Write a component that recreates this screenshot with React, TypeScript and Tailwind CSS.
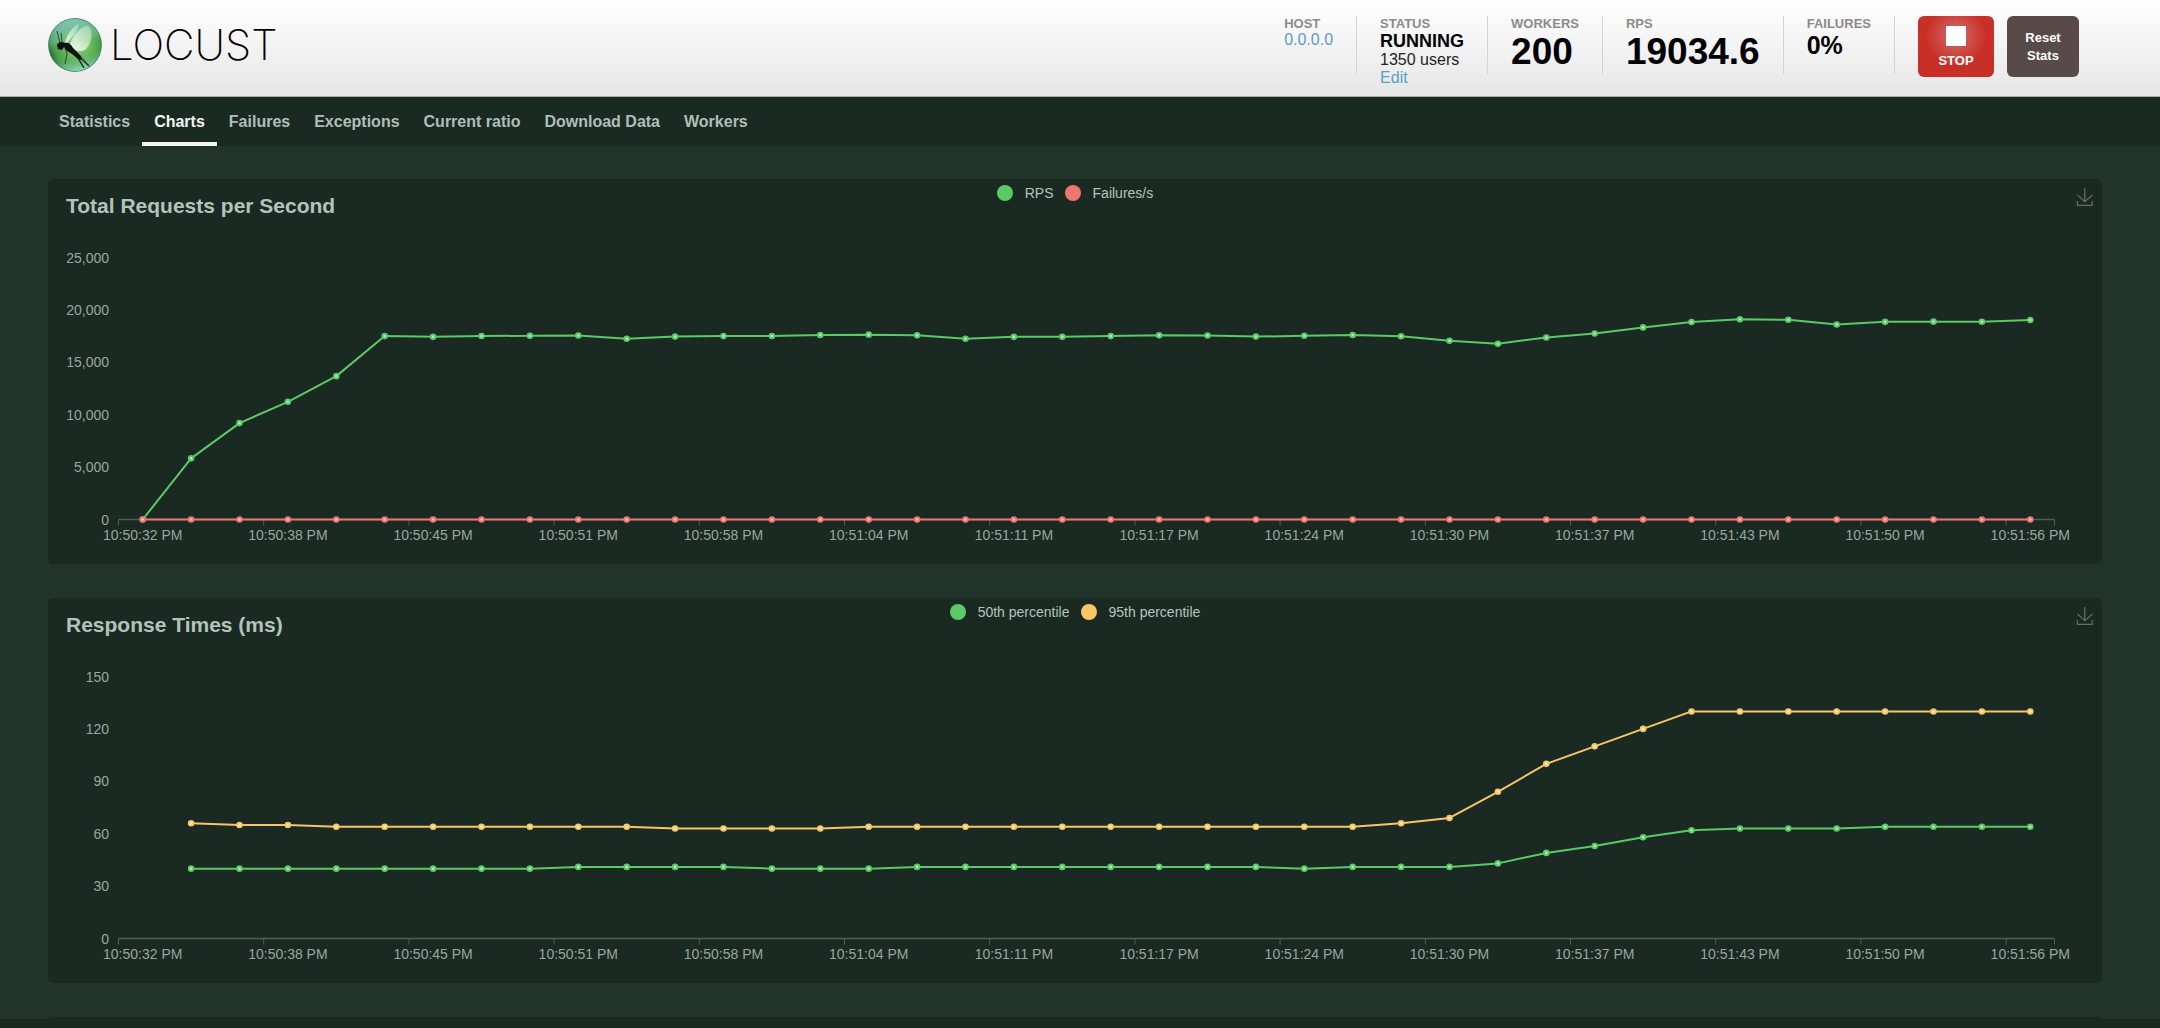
import { useId } from "react";

const navLinks = [
  { text: 'Statistics', url: '#statistics' },
  { text: 'Charts', url: '#charts' },
  { text: 'Failures', url: '#failures' },
  { text: 'Exceptions', url: '#exceptions' },
  { text: 'Current ratio', url: '#ratio' },
  { text: 'Download Data', url: '#download' },
  { text: 'Workers', url: '#workers' },
];

const timeLabels = [
  '10:50:32 PM', '10:50:38 PM', '10:50:45 PM', '10:50:51 PM', '10:50:58 PM', '10:51:04 PM', '10:51:11 PM',
  '10:51:17 PM', '10:51:24 PM', '10:51:30 PM', '10:51:37 PM', '10:51:43 PM', '10:51:50 PM', '10:51:56 PM',
];

const rps = [
  0, 5835, 9200, 11230, 13680, 17500, 17430, 17510, 17530, 17560, 17250, 17450, 17500, 17510, 17610, 17640, 17570,
  17250, 17430, 17440, 17500, 17570, 17560, 17450, 17530, 17600, 17480, 17060, 16770, 17370, 17750, 18330, 18850,
  19110, 19060, 18600, 18860, 18880, 18870, 19034,
];
const failures = rps.map(() => 0);

const p50 = [
  null, 40, 40, 40, 40, 40, 40, 40, 40, 41, 41, 41, 41, 40, 40, 40, 41, 41, 41, 41, 41, 41, 41, 41, 40, 41, 41, 41,
  43, 49, 53, 58, 62, 63, 63, 63, 64, 64, 64, 64,
];
const p95 = [
  null, 66, 65, 65, 64, 64, 64, 64, 64, 64, 64, 63, 63, 63, 63, 64, 64, 64, 64, 64, 64, 64, 64, 64, 64, 64, 66, 69,
  84, 100, 110, 120, 130, 130, 130, 130, 130, 130, 130, 130,
];

const charts = [
  {
    title: 'Total Requests per Second',
    max: 25000,
    series: [
      { name: 'RPS', color: '#5bc965', dot: '#b5f0bb', data: rps },
      { name: 'Failures/s', color: '#ee7571', dot: '#ffd0ce', data: failures },
    ],
  },
  {
    title: 'Response Times (ms)',
    max: 150,
    series: [
      { name: '50th percentile', color: '#5bc965', dot: '#b5f0bb', data: p50 },
      { name: '95th percentile', color: '#f6c667', dot: '#fff0c8', data: p95 },
    ],
  },
];

// plot geometry, in viewBox units
const LEFT = 70.5;
const BASE = 280.5;
const HEIGHT = 262;
const STEP = 48.4;

const Logo = () => {
  const id = useId();
  return (
    <svg viewBox="0 0 54 54" className="size-[54px]" aria-hidden="true">
      <defs>
        <radialGradient id={`${id}ball`} cx="0.55" cy="0.5" r="0.58">
          <stop offset="0" stopColor="#a5dd9c" />
          <stop offset="0.4" stopColor="#6fbf5c" />
          <stop offset="0.75" stopColor="#479b45" />
          <stop offset="1" stopColor="#17592a" />
        </radialGradient>
        <linearGradient id={`${id}sky`} x1="0.3" y1="0" x2="0.5" y2="1">
          <stop offset="0" stopColor="#86cfcf" stopOpacity="0.95" />
          <stop offset="0.4" stopColor="#7cc4a0" stopOpacity="0.5" />
          <stop offset="0.6" stopColor="#4aa045" stopOpacity="0" />
          <stop offset="0.8" stopColor="#6cc088" stopOpacity="0.4" />
          <stop offset="1" stopColor="#a0e0d0" stopOpacity="0.9" />
        </linearGradient>
        <linearGradient id={`${id}wing`} x1="1" y1="0" x2="0.2" y2="1">
          <stop offset="0" stopColor="#fff" stopOpacity="0.3" />
          <stop offset="1" stopColor="#fff" stopOpacity="0.75" />
        </linearGradient>
      </defs>
      <circle cx="27" cy="27" r="26.5" fill={`url(#${id}ball)`} />
      <circle cx="27" cy="27" r="26.5" fill={`url(#${id}sky)`} stroke="#2d6b4c" strokeOpacity="0.6" />
      <path d="M22 27C24 17 34 7 40 8C46 11 44 25 38 31C33 35 26 33 22 27Z" fill={`url(#${id}wing)`} />
      <path d="M17 25C19 16 25 8 31 6C31 11 24 20 18 26Z" fill={`url(#${id}wing)`} />
      <path d="M9 27C10 24 14 23 17 25C20 24 23 26 25 30L33 38L34 42L30 41L24 36L19 33L16 29L14 32L10 31Z" fill="#0c130e" />
      <path d="M32 39L41 48M30 40L36 50" stroke="#142318" strokeWidth="1.4" fill="none" />
      <path d="M12 25L9 13M14 24L13 15M17 30L19 36L17 46" stroke="#142318" strokeOpacity="0.75" strokeWidth="1" fill="none" />
    </svg>
  );
};

const Stat = ({ label, children }: any) => (
  <div className="h-[58px] border-r border-[#d4d4d4] px-[23px]">
    <div className="text-[13px] leading-[15px] font-bold text-[#8b8b8b]">{label}</div>
    {children}
  </div>
);

const Chart = ({ title, max, series }: any) => {
  const x = (i: number) => LEFT + STEP * (i + 0.5);
  const y = (value: number) => BASE - (value / max) * HEIGHT;

  return (
    <section className="rounded-[5px] bg-[#1a2a22]">
      <div className="grid h-[60px] grid-cols-[1fr_auto_1fr] items-start px-2">
        <h2 className="pt-[13px] pl-[10px] text-[21px] leading-7 font-bold text-[#b3c3bc]">{title}</h2>
        <ul className="flex gap-[11px] pt-[6px]">
          {series.map((s: any) => (
            <li key={s.name} className="flex items-center gap-3 text-sm leading-3 text-[#b3c3bc]">
              <span className="size-4 rounded-full" style={{ background: s.color }} />
              {s.name}
            </li>
          ))}
        </ul>
        <button aria-label="Save as image" className="justify-self-end pt-[9px]">
          <svg viewBox="0 0 60 60" className="size-[18px]" fill="none" stroke="#666c69" strokeWidth="4">
            <path d="M4.7,22.9L29.3,45.5L54.7,23.4M4.6,43.6L4.6,58L53.8,58L53.8,43.6M29.2,45.1L29.2,0" />
          </svg>
        </button>
      </div>

      <svg viewBox="0 0 2054 325" className="block w-full text-sm" role="img" aria-label={title}>
        {[0, 1, 2, 3, 4, 5].map((n) => (
          <text key={n} x="61" y={y((max / 5) * n) + 5} textAnchor="end" fill="#98a69f">
            {((max / 5) * n).toLocaleString('en-US')}
          </text>
        ))}

        {/* x axis */}
        <path d={`M${LEFT} ${BASE}H${LEFT + STEP * 40}`} stroke="#4f5f57" strokeWidth="1.5" />
        {[...timeLabels.map((_, i) => i * 3), 40].map((n) => (
          <path key={n} d={`M${LEFT + STEP * n} ${BASE}v6`} stroke="#4f5f57" />
        ))}
        {timeLabels.map((label, i) => (
          <text key={label} x={x(i * 3)} y={BASE + 20} textAnchor="middle" fill="#98a69f">
            {label}
          </text>
        ))}

        {series.map((s: any) => {
          const points = s.data
            .map((value: number | null, i: number) => (value === null ? null : [x(i), y(value)]))
            .filter(Boolean);
          return (
            <g key={s.name}>
              <polyline points={points.join(' ')} fill="none" stroke={s.color} strokeWidth="2" strokeLinejoin="bevel" />
              {points.map(([cx, cy]: number[]) => (
                <circle key={cx} cx={cx} cy={cy} r="2.3" fill={s.dot} stroke={s.color} strokeWidth="2" />
              ))}
            </g>
          );
        })}
      </svg>
    </section>
  );
};

const App = () => {
  return (
    <div className="flex h-screen flex-col overflow-hidden bg-[#20342c] font-['Liberation_Sans',Arial,sans-serif]">
      <header className="flex h-[97px] shrink-0 items-start justify-between border-b border-[#a9b0ac] bg-linear-to-b from-white to-[#e6e6e6] pt-4 pr-[81px] pl-12">
        <a href="#home" className="flex items-center gap-2 pt-[2px]">
          <Logo />
          <span className="font-['Inter'] text-[42px] leading-[54px] font-extralight text-black">LOCUST</span>
        </a>

        <div className="flex">
          <Stat label="HOST">
            <a href="#host" className="block text-base leading-[18px] text-[#5a9dcb]">0.0.0.0</a>
          </Stat>
          <Stat label="STATUS">
            <div className="text-lg leading-5 font-bold text-black">RUNNING</div>
            <div className="text-base leading-[18px] text-[#222]">1350 users</div>
            <a href="#edit" className="block text-base leading-[18px] text-[#5a9dcb]">Edit</a>
          </Stat>
          <Stat label="WORKERS">
            <div className="text-[37px] leading-[42px] font-bold text-black">200</div>
          </Stat>
          <Stat label="RPS">
            <div className="text-[37px] leading-[42px] font-bold text-black">19034.6</div>
          </Stat>
          <Stat label="FAILURES">
            <div className="text-[25px] leading-7 font-bold text-black">0%</div>
          </Stat>
          <button className="ml-[23px] flex h-[61px] w-[76px] flex-col items-center gap-[6px] rounded-md bg-[#c82f26] bg-[radial-gradient(circle_at_50%_32%,#cf5a55_10px,#c82f26_30px)] pt-[10px] text-[13px] leading-[18px] font-bold text-white">
            <span className="size-5 bg-white" />
            STOP
          </button>
          <button className="ml-[13px] h-[61px] w-[72px] rounded-md bg-[#584a48] px-3 text-[13px] leading-[18px] font-bold text-white">
            Reset Stats
          </button>
        </div>
      </header>

      <nav className="flex h-[49px] shrink-0 bg-[#1a2a22] pl-[47px]">
        {navLinks.map((link) => (
          <a
            key={link.text}
            href={link.url}
            className={`border-b-4 px-3 pt-[13px] leading-6 font-bold ${link.text === 'Charts' ? 'border-[#f2f5f0] text-[#f2f5f0]' : 'border-transparent text-[#b0beb8]'}`}
          >
            {link.text}
          </a>
        ))}
      </nav>

      <main className="flex min-h-0 flex-1 flex-col gap-[34px] overflow-hidden pt-[33px] pr-[58px] pl-12">
        {charts.map((chart) => (
          <Chart key={chart.title} {...chart} />
        ))}
        <section className="h-96 shrink-0 rounded-[5px] bg-[#1a2a22]" />
      </main>

      <footer className="h-[9px] shrink-0 bg-[#1a2a22]" />
    </div>
  );
};

export default App;
